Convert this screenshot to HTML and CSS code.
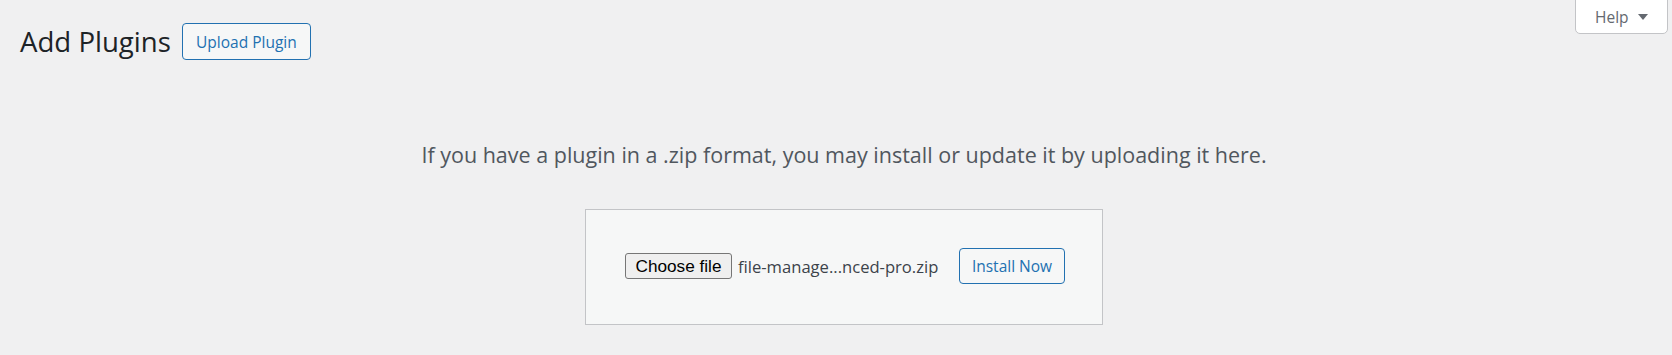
FILE: index.html
```html
<!DOCTYPE html>
<html lang="en">
<head>
<meta charset="utf-8">
<title>Add Plugins</title>
<link rel="stylesheet" href="styles.css">
</head>
<body>
<div class="screen-meta-links">
  <button class="help-tab" type="button">Help <span class="arrow"></span></button>
</div>
<div class="wrap">
  <div class="title-row">
    <h1 class="page-title">Add Plugins</h1>
    <a class="title-action" href="#">Upload Plugin</a>
  </div>
  <div class="upload-plugin">
    <p class="install-help">If you have a plugin in a .zip format, you may install or update it by uploading it here.</p>
    <form class="upload-form">
      <div class="file-input">
        <span class="choose-btn">Choose file</span>
        <span class="file-name">file-manage...nced-pro.zip</span>
      </div>
      <button class="install-btn" type="button">Install Now</button>
    </form>
  </div>
</div>
</body>
</html>
```

FILE: styles.css
```css
html, body {
  margin: 0;
  padding: 0;
}
body {
  background: #f0f0f1;
  font-family: "Open Sans", "Noto Sans", sans-serif;
  color: #3c434a;
  width: 1672px;
  height: 355px;
  overflow: hidden;
}
.screen-meta-links {
  float: right;
  margin-right: 4px;
}
.help-tab {
  display: flex;
  align-items: center;
  box-sizing: border-box;
  width: 93px;
  height: 35px;
  margin-top: -1px;
  padding: 0 0 0 19px;
  background: #fff;
  border: 1px solid #c3c4c7;
  border-radius: 0 0 5px 5px;
  color: #646970;
  font-family: "Open Sans", "Noto Sans", sans-serif;
  font-size: 15.5px;
}
.help-tab .arrow {
  width: 0;
  height: 0;
  margin-left: 9px;
  border-left: 5px solid transparent;
  border-right: 5px solid transparent;
  border-top: 6px solid #646970;
}
.wrap {
  padding-left: 20px;
}
.title-row {
  display: flex;
  align-items: center;
  padding-top: 23px;
  height: 37px;
}
.page-title {
  margin: 0 11px 0 0;
  font-size: 27.6px;
  font-weight: 400;
  color: #1d2327;
  line-height: 37px;
}
.title-action {
  box-sizing: border-box;
  display: flex;
  align-items: center;
  justify-content: center;
  width: 129px;
  height: 37px;
  border: 1px solid #2271b1;
  border-radius: 4px;
  background: #f6f7f7;
  color: #2271b1;
  font-size: 15.5px;
  text-decoration: none;
}
.upload-plugin {
  display: flex;
  flex-direction: column;
  align-items: center;
  width: 1648px;
}
.install-help {
  margin: 0;
  padding-top: 80px;
  font-size: 21.5px;
  line-height: 30px;
  color: #50575e;
}
.upload-form {
  box-sizing: border-box;
  display: flex;
  align-items: center;
  width: 518px;
  height: 116px;
  margin-top: 39px;
  padding: 0 37px 2px 39px;
  background: #f6f7f7;
  border: 1px solid #c3c4c7;
}
.file-input {
  display: flex;
  align-items: center;
  width: 334px;
}
.choose-btn {
  box-sizing: border-box;
  display: flex;
  align-items: center;
  justify-content: center;
  width: 107px;
  height: 26px;
  background: #efefef;
  border: 1px solid #767676;
  border-radius: 3px;
  color: #000;
  font-family: "Liberation Sans", Arial, sans-serif;
  font-size: 17.2px;
}
.file-name {
  margin-left: 6px;
  font-size: 16.6px;
  color: #3c434a;
  white-space: nowrap;
}
.install-btn {
  box-sizing: border-box;
  width: 106px;
  height: 36px;
  padding: 0;
  border: 1px solid #2271b1;
  border-radius: 4px;
  background: #f6f7f7;
  color: #2271b1;
  font-family: "Open Sans", "Noto Sans", sans-serif;
  font-size: 15.5px;
}
```
